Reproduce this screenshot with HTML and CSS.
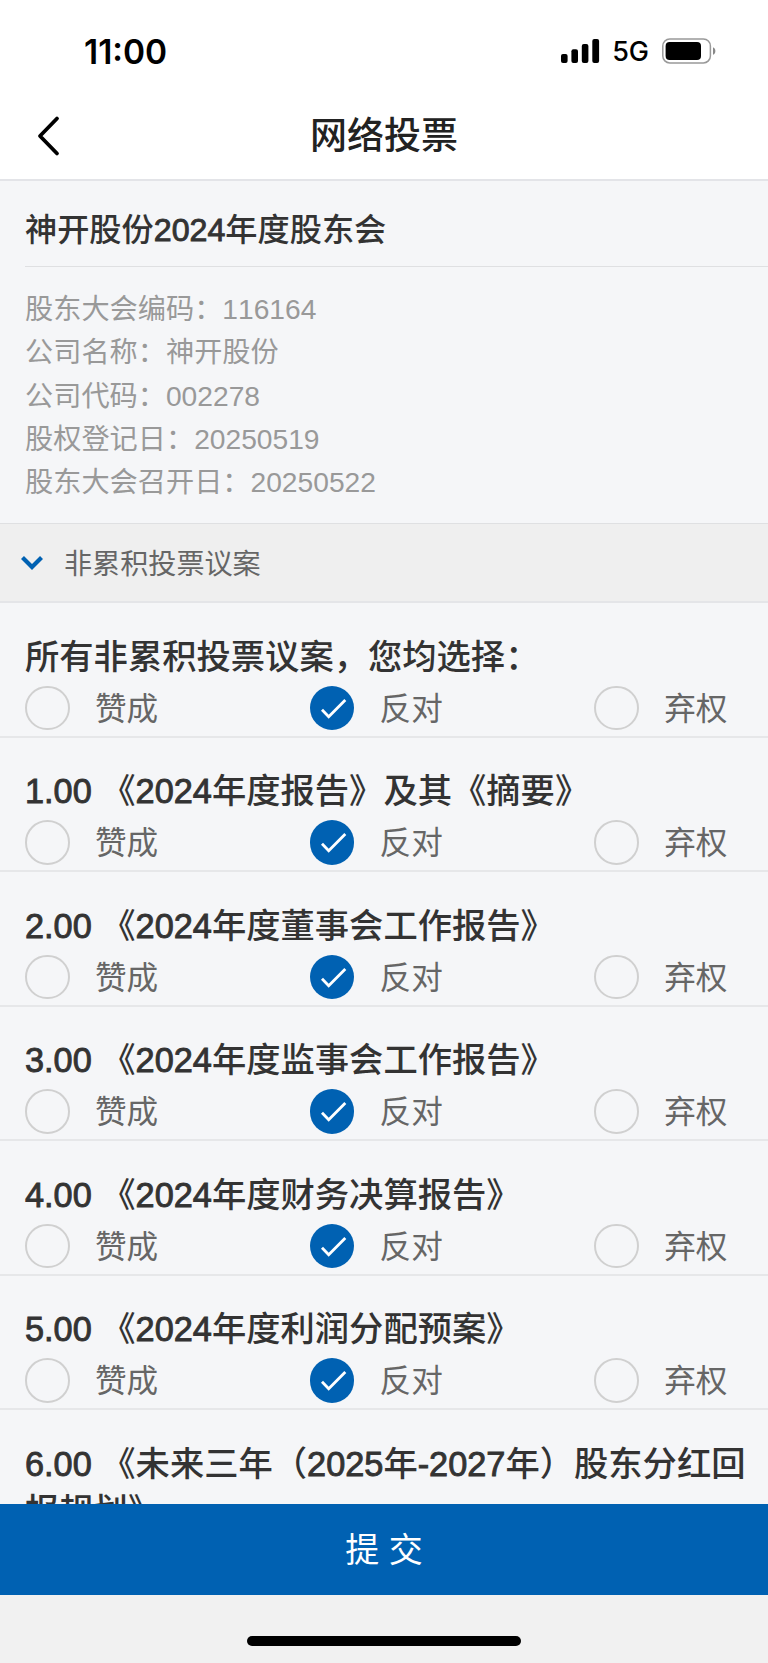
FILE: index.html
```html
<!DOCTYPE html>
<html lang="zh-CN">
<head>
<meta charset="UTF-8">
<meta name="viewport" content="width=device-width, initial-scale=1.0">
<title>网络投票</title>
<link rel="stylesheet" href="styles.css">
</head>
<body>
<div class="page">
  <div class="status-bar">
    <span class="status-time">11:00</span>
    <div class="status-icons">
      <svg width="39" height="25" viewBox="0 0 39 25">
        <rect x="0" y="15" width="6.6" height="9" rx="2"/>
        <rect x="10.4" y="10.3" width="6.6" height="13.7" rx="2"/>
        <rect x="20.8" y="5" width="6.6" height="19" rx="2"/>
        <rect x="31.3" y="0" width="6.8" height="24" rx="2"/>
      </svg>
      <span class="status-network">5G</span>
      <svg width="55" height="26" viewBox="0 0 55 26">
        <rect x="0.8" y="0.9" width="47.6" height="24" rx="7" fill="none" stroke="#999" stroke-width="1.5"/>
        <rect x="3.6" y="3.9" width="35.4" height="18" rx="4"/>
        <path d="M51 9.2c3.2 1.3 3.2 6.3 0 7.6z" fill="#888"/>
      </svg>
    </div>
  </div>

  <div class="nav-bar">
    <svg class="nav-back" width="26" height="42" viewBox="0 0 26 42">
      <path d="M21 3.5 4 21 21 38.5" fill="none" stroke="#000" stroke-width="3.8" stroke-linecap="round" stroke-linejoin="round"/>
    </svg>
    <h1 class="nav-title">网络投票</h1>
  </div>

  <div class="content">
    <h2 class="meeting-title">神开股份<span class="num">2024</span>年度股东会</h2>
    <div class="meeting-info">
      <p>股东大会编码：116164</p>
      <p>公司名称：神开股份</p>
      <p>公司代码：002278</p>
      <p>股权登记日：20250519</p>
      <p>股东大会召开日：20250522</p>
    </div>

    <div class="section-header">
      <svg width="22" height="16" viewBox="0 0 22 16">
        <path d="M1.5 2.5 11 12 20.5 2.5" fill="none" stroke="#0061b2" stroke-width="4.2"/>
      </svg>
      <span class="section-name">非累积投票议案</span>
    </div>

    <div id="proposals"></div>
  </div>

  <button class="submit">提 交</button>
  <div class="bottom-bar"><div class="home-indicator"></div></div>
</div>
<script>
  const proposals = [
    { title: '所有非累积投票议案，您均选择：', vote: '反对' },
    { title: '1.00 《2024年度报告》及其《摘要》', vote: '反对' },
    { title: '2.00 《2024年度董事会工作报告》', vote: '反对' },
    { title: '3.00 《2024年度监事会工作报告》', vote: '反对' },
    { title: '4.00 《2024年度财务决算报告》', vote: '反对' },
    { title: '5.00 《2024年度利润分配预案》', vote: '反对' },
    { title: '6.00 《未来三年（2025年-2027年）股东分红回报规划》' }
  ];
  const options = ['赞成', '反对', '弃权'];
  const checkIcon = '<svg width="44" height="44" viewBox="0 0 44 44"><path d="M12 23.7 18.7 30.7 35.3 14" fill="none" stroke="#fff" stroke-width="2.8"/></svg>';

  function renderOptions(vote) {
    return '<div class="options">' + options.map(name => `
      <div class="option">
        <span class="radio ${name === vote ? 'checked' : ''}">${name === vote ? checkIcon : ''}</span>
        <span>${name}</span>
      </div>`).join('') + '</div>';
  }

  document.getElementById('proposals').innerHTML = proposals.map(item => `
    <div class="proposal">
      <h3 class="proposal-title">${item.title.replace(/[\d.-]+/g, '<span class="num">$&</span>')}</h3>
      ${item.vote ? renderOptions(item.vote) : ''}
    </div>`).join('');
</script>
</body>
</html>
```
FILE: styles.css
```css
* {
  box-sizing: border-box;
  margin: 0;
  padding: 0;
}
body {
  font-family: "Liberation Sans", "Noto Sans CJK SC", sans-serif;
  font-kerning: none;
  color: #333;
  text-spacing-trim: space-all;
}
svg {
  display: block;
  flex: none;
}
.page {
  display: flex;
  flex-direction: column;
  height: 1663px;
  overflow: hidden;
  background: #f5f6f8;
}
/* medium weight for the digits */
.num {
  -webkit-text-stroke: 0.9px #333;
}

/* top bars */
.status-bar {
  display: flex;
  flex: none;
  justify-content: space-between;
  align-items: center;
  height: 102px;
  padding: 0 51px 0 84px;
  background: #fff;
  color: #000;
}
.status-time {
  padding-top: 1px;
  font: 600 33.5px/40px Inter, sans-serif;
  font-kerning: auto;
}
.status-icons {
  display: flex;
  align-items: center;
}
.status-network {
  margin: 2px 13px 0 12px;
  font: 500 27px/32px Inter, sans-serif;
}
.nav-bar {
  display: grid;
  grid-template-columns: 90px 1fr 90px;
  align-items: center;
  flex: none;
  height: 79px;
  padding-bottom: 9px;
  border-bottom: 2px solid #e3e4e8;
  background: #fff;
}
.nav-back {
  margin-left: 36px;
}
.nav-title {
  padding-top: 2px;
  color: #222;
  font-size: 37px;
  font-weight: 500;
  line-height: 50px;
  text-align: center;
}

/* meeting details */
.content {
  flex: 1;
  min-height: 0;
  overflow: hidden;
}
.meeting-title {
  height: 86px;
  margin-left: 25px;
  border-bottom: 1px solid #dfe0e2;
  font-size: 32.2px;
  font-weight: 500;
  line-height: 98px;
}
.meeting-info {
  height: 256px;
  padding: 21px 25px 0;
  color: #999;
  font-size: 28.2px;
  line-height: 43.3px;
}
.section-header {
  display: flex;
  align-items: center;
  gap: 21px;
  height: 80px;
  padding-left: 21px;
  border-top: 1px solid #dfe0e2;
  border-bottom: 2px solid #e4e5e8;
  background: #efefef;
  color: #666;
  font-size: 28.1px;
}
.section-name {
  padding-bottom: 2px;
}

/* proposals */
.proposal {
  min-height: 134.5px;
  padding: 30.5px 0 0 25px;
  border-bottom: 2px solid #e6e7e9;
}
.proposal-title {
  margin-right: 18px;
  font-size: 34.3px;
  font-weight: 500;
  line-height: 47.5px;
}
.options {
  display: grid;
  grid-template-columns: 284.6px 284.6px 1fr;
  margin-top: 4.5px;
}
.option {
  display: flex;
  align-items: center;
  gap: 25.5px;
  height: 44.5px;
  color: #666;
  font-size: 31.6px;
  line-height: 44px;
}
.radio {
  width: 44.5px;
  height: 44.5px;
  border: 2px solid #d0d0d0;
  border-radius: 50%;
}
.radio.checked {
  border: 0;
  background: #0061b2;
}
.radio + span {
  padding-top: 2px;
}

/* footer */
.submit {
  flex: none;
  height: 91px;
  padding-bottom: 4px;
  border: 0;
  background: #0061b2;
  color: #fff;
  font-family: inherit;
  font-size: 34px;
}
.bottom-bar {
  flex: none;
  height: 68px;
  padding-top: 41px;
  background: #f1f1f1;
}
.home-indicator {
  width: 274px;
  height: 10px;
  margin: 0 auto;
  border-radius: 5px;
  background: #000;
}
```
